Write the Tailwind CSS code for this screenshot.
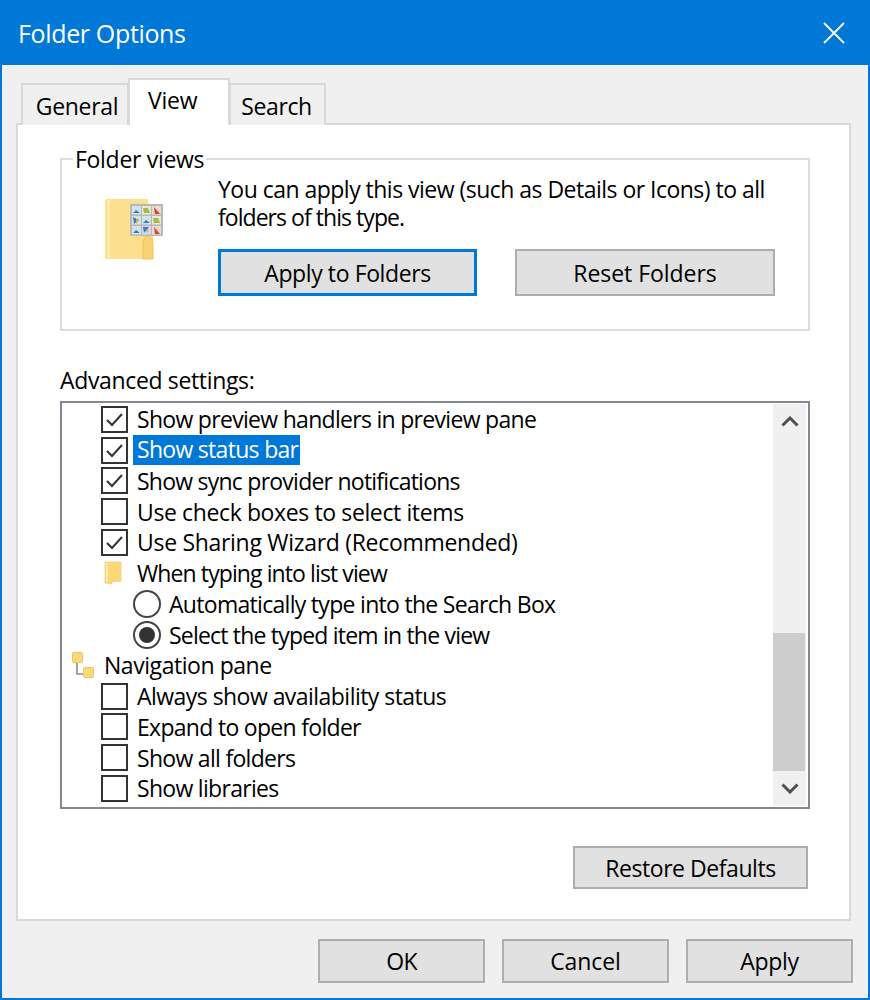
<!DOCTYPE html>
<html>
<head>
<meta charset="utf-8">
<script src="https://cdn.jsdelivr.net/npm/@tailwindcss/browser@4"></script>
</head>
<body class="font-['Open_Sans',sans-serif] text-black text-[23px] leading-[28px] tracking-[-0.7px]">
<div class="w-[870px] h-[1000px] flex flex-col border-2 border-t-0 border-[#0078d7] bg-[#f0f0f0]">
  <div class="h-[65px] shrink-0 -mx-[2px] bg-[#0078d7] text-white text-[25px] tracking-[-0.35px] flex items-center justify-between pl-[18px] pr-[25px]">
    <span>Folder Options</span>
    <svg width="22" height="22" viewBox="0 0 22 22" fill="none" stroke="#fff" stroke-width="1.8"><path d="M1 1 21 21M21 1 1 21"/></svg>
  </div>
  <div class="flex-1 flex flex-col pl-[14px] pr-[17px]">
    <div class="flex items-end h-[60px] pl-[5px] relative z-10 -mb-[2px]">
      <div class="w-[108px] h-[42px] bg-[#f0f0f0] border-2 border-b-0 border-[#d9d9d9] flex items-center justify-center pt-[2px] pl-[4px] tracking-[-0.3px]">General</div>
      <div class="w-[102px] h-[47px] bg-white border-2 border-b-0 border-[#d9d9d9] -mx-[1px] relative z-10 flex items-start pl-[18px] pt-[6px] tracking-[-0.2px]">View</div>
      <div class="w-[97px] h-[42px] bg-[#f0f0f0] border-2 border-b-0 border-[#d9d9d9] flex items-center justify-center pt-[2px] pr-[2px] tracking-[-0.4px]">Search</div>
    </div>
    <div class="h-[798px] bg-white border-2 border-[#d9d9d9] pl-[42px] pr-[39px] pt-[20px] flex flex-col">
      <fieldset class="h-[186px] border-2 border-[#dcdcdc] pl-[44px] pr-[33px]">
        <legend class="-ml-[33px] px-[2px] h-[28px] tracking-[-0.3px]">Folder views</legend>
        <div class="flex">
          <svg class="w-[58px] h-[62px] mt-[26px] -ml-[1px] mr-[55px] shrink-0" viewBox="0 0 58 62">
            <path d="M0 1.500Q0 0 1.500 0H43V37H48V60H1.500Q0 60 0 58.500Z" fill="#fde08d"/>
            <path d="M3.500 1V59" stroke="#fff0c0" stroke-width="2"/>
            <path d="M38 60V47Q38 37 43 37T48 47V60Z" fill="#fbd272" stroke="#eec25f"/>
            <rect x="25" y="5" width="33" height="32" fill="#b8b8b8"/>
            <rect x="27" y="7" width="9" height="8.500" fill="#d3e3ee"/><rect x="37" y="7" width="9" height="8.500" fill="#e6ecd0"/><rect x="47" y="7" width="9" height="8.500" fill="#eed8d2"/>
            <rect x="27" y="17" width="9" height="8.500" fill="#d3e3ee"/><rect x="37" y="17" width="9" height="8.500" fill="#d3e3ee"/><rect x="47" y="17" width="9" height="8.500" fill="#e6ecd0"/>
            <rect x="27" y="27" width="9" height="8.500" fill="#d3e3ee"/><rect x="37" y="27" width="9" height="8.500" fill="#d3dcee"/><rect x="47" y="27" width="9" height="8.500" fill="#eed8d2"/>
            <path d="M49 8l6 7h-5ZM49 28l6 7h-5Z" fill="#d8402f"/>
            <path d="M38 9h5l2 5h-6ZM48 19h5l2 5h-6Z" fill="#a6b94c"/>
            <path d="M28 14l3-3 4 3ZM28 34l3-3 4 3ZM38 24l3-3 4 3Z" fill="#3f7f9e"/>
            <path d="M28 18l6 3-5 4ZM38 28l6 0-5 6Z" fill="#3f78c8"/>
            <path d="M31 20l3 1-3 4ZM41 31l3-1-2 4Z" fill="#e0b030"/>
          </svg>
          <div class="w-[557px]">
            <div class="mt-[2px]">
              <p class="tracking-[-0.52px]">You can apply this view (such as Details or Icons) to all</p>
              <p class="tracking-[-0.95px]">folders of this type.</p>
            </div>
            <div class="mt-[18px] flex justify-between">
              <button class="w-[259px] h-[47px] bg-[#e1e1e1] border-[3px] border-[#0078d7] tracking-[-0.4px]">Apply to Folders</button>
              <button class="w-[260px] h-[47px] bg-[#e1e1e1] border-2 border-[#adadad] tracking-[-0.05px]">Reset Folders</button>
            </div>
          </div>
        </div>
      </fieldset>
      <div class="mt-[35px] h-[28px] tracking-[-0.35px]">Advanced settings:</div>
      <div class="mt-[7px] h-[408px] border-2 border-[#828790] flex p-[1px] pr-[2px]">
        <div class="flex-1 pl-[38px] flex flex-col">
          <div class="h-[30.75px] flex items-center"><span class="w-[27px] h-[27px] border-2 border-[#333] flex items-center justify-center shrink-0"><svg width="19" height="15" viewBox="0 0 19 15" fill="none" stroke="#333" stroke-width="2"><path d="M2 8l5 5L17 2"/></svg></span><span class="ml-[9px]">Show preview handlers in preview pane</span></div>
          <div class="h-[30.75px] flex items-center"><span class="w-[27px] h-[27px] border-2 border-[#333] flex items-center justify-center shrink-0"><svg width="19" height="15" viewBox="0 0 19 15" fill="none" stroke="#333" stroke-width="2"><path d="M2 8l5 5L17 2"/></svg></span><span class="ml-[5px] pl-[4px] bg-[#0078d7] text-white h-[30px] w-[167px] whitespace-nowrap">Show status bar</span></div>
          <div class="h-[30.75px] flex items-center"><span class="w-[27px] h-[27px] border-2 border-[#333] flex items-center justify-center shrink-0"><svg width="19" height="15" viewBox="0 0 19 15" fill="none" stroke="#333" stroke-width="2"><path d="M2 8l5 5L17 2"/></svg></span><span class="ml-[9px] tracking-[-0.76px]">Show sync provider notifications</span></div>
          <div class="h-[30.75px] flex items-center"><span class="w-[27px] h-[27px] border-2 border-[#333] shrink-0"></span><span class="ml-[9px] tracking-[-0.38px]">Use check boxes to select items</span></div>
          <div class="h-[30.75px] flex items-center"><span class="w-[27px] h-[27px] border-2 border-[#333] flex items-center justify-center shrink-0"><svg width="19" height="15" viewBox="0 0 19 15" fill="none" stroke="#333" stroke-width="2"><path d="M2 8l5 5L17 2"/></svg></span><span class="ml-[9px] tracking-[-0.3px]">Use Sharing Wizard (Recommended)</span></div>
          <div class="h-[30.75px] flex items-center"><svg class="w-[27px] h-[24px] shrink-0" viewBox="0 0 27 24"><path d="M4 1H20V21H4Z" fill="#fde08d"/><path d="M4 1V22L11 23V20H20V1Z" fill="#fbd878" stroke="#f0cb6e" stroke-width=".6"/><path d="M6 2V21" stroke="#fff0c0" stroke-width="1.500"/></svg><span class="ml-[9px] tracking-[-0.9px]">When typing into list view</span></div>
          <div class="h-[30.75px] flex items-center pl-[32px]"><span class="w-[28px] h-[28px] rounded-full border-2 border-[#444] shrink-0"></span><span class="ml-[8px]">Automatically type into the Search Box</span></div>
          <div class="h-[30.75px] flex items-center pl-[32px]"><span class="w-[28px] h-[28px] rounded-full border-2 border-[#444] shrink-0 flex items-center justify-center"><span class="w-[16px] h-[16px] rounded-full bg-[#333]"></span></span><span class="ml-[8px] tracking-[-0.8px]">Select the typed item in the view</span></div>
          <div class="h-[30.75px] flex items-center -ml-[31px]"><svg class="w-[27px] h-[29px] shrink-0" viewBox="0 0 27 29"><path d="M7 10V23H15" fill="none" stroke="#8c8c8c" stroke-width="1.600"/><rect x="2.500" y="1.500" width="10" height="10" rx="1" fill="#fbd878" stroke="#e8c566"/><rect x="13.500" y="16.500" width="10" height="10" rx="1" fill="#fbd878" stroke="#e8c566"/></svg><span class="ml-[7px] tracking-[-0.45px]">Navigation pane</span></div>
          <div class="h-[30.75px] flex items-center"><span class="w-[27px] h-[27px] border-2 border-[#333] shrink-0"></span><span class="ml-[9px] tracking-[-0.54px]">Always show availability status</span></div>
          <div class="h-[30.75px] flex items-center"><span class="w-[27px] h-[27px] border-2 border-[#333] shrink-0"></span><span class="ml-[9px]">Expand to open folder</span></div>
          <div class="h-[30.75px] flex items-center"><span class="w-[27px] h-[27px] border-2 border-[#333] shrink-0"></span><span class="ml-[9px]">Show all folders</span></div>
          <div class="h-[30.75px] flex items-center"><span class="w-[27px] h-[27px] border-2 border-[#333] shrink-0"></span><span class="ml-[9px]">Show libraries</span></div>
        </div>
        <div class="w-[33px] bg-[#f0f0f0] flex flex-col">
          <div class="h-[35px] flex items-center justify-center"><svg width="18" height="11" viewBox="0 0 18 11" fill="none" stroke="#505050" stroke-width="3"><path d="M1.500 9.500 9 2l7.500 7.500"/></svg></div>
          <div class="flex-1"></div>
          <div class="h-[138px] w-[32px] bg-[#cdcdcd]"></div>
          <div class="h-[35px] flex items-center justify-center"><svg width="18" height="11" viewBox="0 0 18 11" fill="none" stroke="#505050" stroke-width="3"><path d="M1.500 1.500 9 9l7.500-7.500"/></svg></div>
        </div>
      </div>
      <div class="mt-[37px] flex justify-end pr-[2px]">
        <button class="w-[235px] h-[43px] bg-[#e1e1e1] border-2 border-[#adadad] tracking-[-0.45px]">Restore Defaults</button>
      </div>
    </div>
    <div class="mt-[18px] flex justify-end gap-[17px] -mr-[2px]">
      <button class="w-[167px] h-[44px] bg-[#e1e1e1] border-2 border-[#adadad]">OK</button>
      <button class="w-[167px] h-[44px] bg-[#e1e1e1] border-2 border-[#adadad] tracking-[-0.1px]">Cancel</button>
      <button class="w-[167px] h-[44px] bg-[#e1e1e1] border-2 border-[#adadad] tracking-[-0.3px]">Apply</button>
    </div>
  </div>
</div>
</body>
</html>
